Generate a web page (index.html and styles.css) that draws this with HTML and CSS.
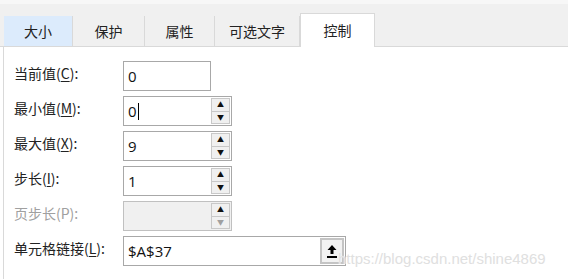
FILE: index.html
```html
<!DOCTYPE html>
<html lang="zh-CN">
<head>
  <meta charset="UTF-8" />
  <title>设置控件格式</title>
  <link rel="stylesheet" href="styles.css">
</head>
<body>

<div class="dialog">
  <!-- Tabs -->
  <div class="tab-strip">
    <div class="tab tab-hover" style="width: 69px">大小</div>
    <div class="tab" style="width: 72px">保护</div>
    <div class="tab" style="width: 70px">属性</div>
    <div class="tab" style="width: 85px">可选文字</div>
    <div class="tab tab-active" style="width: 75px">控制</div>
  </div>

  <div class="panel">
    <div class="form-row">
      <div class="label">当前值(<u>C</u>):</div>
      <div class="field field-short"><span class="value">0</span></div>
    </div>

    <div class="form-row">
      <div class="label">最小值(<u>M</u>):</div>
      <div class="field field-spin">
        <span class="value">0<span class="caret"></span></span>
        <div class="spin"><div class="spin-btn">▲</div><div class="spin-btn">▼</div></div>
      </div>
    </div>

    <div class="form-row">
      <div class="label">最大值(<u>X</u>):</div>
      <div class="field field-spin">
        <span class="value">9</span>
        <div class="spin"><div class="spin-btn">▲</div><div class="spin-btn">▼</div></div>
      </div>
    </div>

    <div class="form-row">
      <div class="label">步长(<u>I</u>):</div>
      <div class="field field-spin">
        <span class="value">1</span>
        <div class="spin"><div class="spin-btn">▲</div><div class="spin-btn">▼</div></div>
      </div>
    </div>

    <div class="form-row disabled">
      <div class="label">页步长(P):</div>
      <div class="field field-spin">
        <span class="value"></span>
        <div class="spin"><div class="spin-btn">▲</div><div class="spin-btn">▼</div></div>
      </div>
    </div>

    <div class="form-row">
      <div class="label">单元格链接(<u>L</u>):</div>
      <div class="field field-link">
        <span class="value">$A$37</span>
        <div class="ref-btn">
          <svg width="12" height="14" viewBox="0 0 12 14">
            <path d="M6 1 L10.5 6 L7.5 6 L7.5 10 L4.5 10 L4.5 6 L1.5 6 Z" fill="#000"/>
            <rect x="1" y="12" width="10" height="2" fill="#000"/>
          </svg>
        </div>
      </div>
    </div>

    <div class="watermark">https://blog.csdn.net/shine4869</div>
  </div>
</div>

</body>
</html>
```

FILE: styles.css
```css
body {
  margin: 0;
  background: #fff;
  font-family: "Noto Sans CJK SC", "Noto Sans", sans-serif;
  color: #222;
}

.dialog {
  width: 568px;
  height: 279px;
  overflow: hidden;
}

/* Tab strip */
.tab-strip {
  display: flex;
  align-items: flex-end;
  height: 42px;
  padding-left: 4px;
  background: #f0f0f0;
  border-top: 4px solid #f7f7f7;
  border-bottom: 1px solid #d9d9d9;
}

.tab {
  height: 30px;
  line-height: 30px;
  text-align: center;
  font-size: 14px;
  border-right: 1px solid #d9d9d9;
  box-sizing: border-box;
}

.tab-hover {
  background: #dcebfc;
}

.tab-active {
  height: 34px;
  line-height: 33px;
  background: #fff;
  border: 1px solid #d9d9d9;
  border-bottom: none;
  margin-bottom: -1px;
}

/* Panel */
.panel {
  position: relative;
  height: 232px;
  margin-left: 3px;
  border-left: 1px solid #d9d9d9;
  padding: 14px 0 0 10px;
  display: flex;
  flex-direction: column;
  gap: 5px;
}

.form-row {
  display: flex;
  align-items: center;
  height: 30px;
}

.label {
  width: 109px;
  font-size: 14px;
  padding-bottom: 7px;
}

.label u {
  text-underline-offset: 2px;
}

.field {
  display: flex;
  align-items: center;
  height: 30px;
  box-sizing: border-box;
  border: 1px solid #a8a8a8;
  background: #fff;
}

.field-short {
  width: 88px;
}

.field-spin {
  width: 109px;
  padding-right: 1px;
}

.field-link {
  width: 223px;
  padding-right: 1px;
}

.value {
  flex: 1;
  padding-left: 4px;
  font-family: "Open Sans", "Noto Sans", sans-serif;
  font-size: 15px;
  color: #111;
}

.caret {
  display: inline-block;
  width: 1px;
  height: 17px;
  background: #000;
  vertical-align: -3px;
  margin-left: 1px;
}

.spin {
  display: flex;
  flex-direction: column;
  width: 19px;
  height: 26px;
  border: 1px solid #c8c8c8;
  box-sizing: border-box;
}

.spin-btn {
  flex: 1;
  display: flex;
  align-items: center;
  justify-content: center;
  background: #f0f0f0;
  font-size: 7px;
  color: #111;
  line-height: 1;
}

.spin-btn + .spin-btn {
  border-top: 1px solid #c8c8c8;
}

.ref-btn {
  width: 24px;
  height: 26px;
  box-sizing: border-box;
  border: 2px solid #c4c4c4;
  background: #f2f2f2;
  display: flex;
  align-items: center;
  justify-content: center;
}

/* Disabled row */
.disabled .label {
  color: #a0a0a0;
}

.disabled .field {
  background: #f0f0f0;
  border-color: #c0c0c0;
}

.disabled .spin-btn + .spin-btn {
  color: #a0a0a0;
}

.watermark {
  position: absolute;
  left: 334px;
  top: 203px;
  font-family: "Liberation Sans", Arial, sans-serif;
  font-size: 15px;
  color: #e0e0e0;
  text-shadow: 0 0 1px #fff;
}
```
